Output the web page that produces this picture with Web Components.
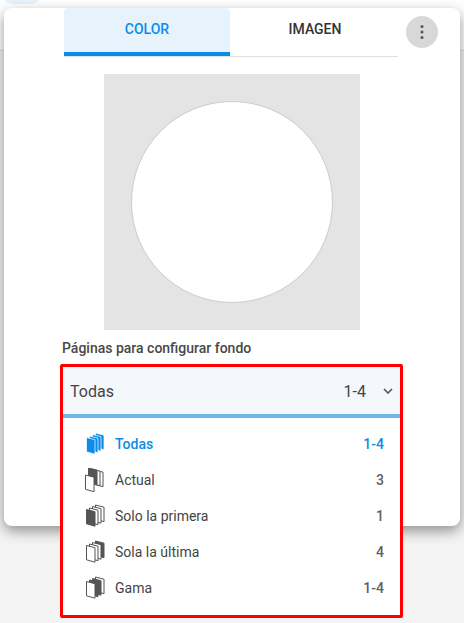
<!DOCTYPE html>
<html lang="es">
<head>
<meta charset="utf-8">
<title>Fondo</title>
<style>
  html, body { margin: 0; height: 100%; }
  body { background: #f4f4f4; font-family: Roboto, "Liberation Sans", sans-serif; overflow: hidden; }
</style>
</head>
<body>
<bg-panel>
  <page-tabs></page-tabs>
  <color-preview></color-preview>
  <page-select label="Páginas para configurar fondo">
    <page-option pages="bbbb" name="Todas" range="1-4" selected></page-option>
    <page-option pages="wdww" gap name="Actual" range="3"></page-option>
    <page-option pages="dwww" name="Solo la primera" range="1"></page-option>
    <page-option pages="wwwd" name="Sola la última" range="4"></page-option>
    <page-option pages="wddw" name="Gama" range="1-4"></page-option>
  </page-select>
</bg-panel>

<script>
(function() {
    'use strict';

    class BgPanel extends HTMLElement {
        constructor() {
            super();
            this.attachShadow({ mode: 'open' }).innerHTML = `
                <style>
                    :host { display: block; padding-top: 8px; position: relative; }
                    .backdrop {
                        position: absolute; left: 0; top: 0; right: 0; height: 50px;
                        background: #fff; border-bottom: 1px solid #ddd;
                    }
                    .blob {
                        position: absolute; left: 0; top: -10px; width: 44px; height: 14px;
                        border-radius: 0 0 20px 20px; background: #e6f3fd;
                    }
                    .panel {
                        position: relative;
                        box-sizing: border-box;
                        height: 518px;
                        margin: 0 4px;
                        padding-left: 56px;
                        background: #fff;
                        border-radius: 8px;
                        box-shadow: 0 5px 14px rgba(0,0,0,.42);
                    }
                </style>
                <div class="backdrop"></div>
                <div class="blob"></div>
                <div class="panel"><slot></slot></div>
            `;
        }
    }

    class PageTabs extends HTMLElement {
        constructor() {
            super();
            this.attachShadow({ mode: 'open' }).innerHTML = `
                <style>
                    :host { display: flex; align-items: flex-start; gap: 8px; margin-left: 4px; }
                    .tabs { display: flex; width: 334px; border-bottom: 1px solid #e0e0e0; height: 48px; }
                    .tab {
                        flex: 0 0 166px;
                        height: 42px;
                        padding-bottom: 2px;
                        display: flex; align-items: center; justify-content: center;
                        font: 500 14px Roboto, sans-serif;
                        color: #333;
                        border-radius: 4px 4px 0 0;
                        border-bottom: 4px solid transparent;
                    }
                    .tab.active { color: #0b8ce9; background: #e6f3fd; border-bottom-color: #0b8ce9; }
                    .tab + .tab { flex-basis: 167px; padding-left: 1.5px; }
                    .more {
                        width: 32px; height: 32px; margin-top: 8px; border-radius: 50%;
                        background: #d8d8d8; display: flex; align-items: center; justify-content: center;
                    }
                </style>
                <div class="tabs">
                    <div class="tab active">COLOR</div>
                    <div class="tab">IMAGEN</div>
                </div>
                <div class="more">
                    <svg width="4" height="16" viewBox="0 0 4 16" fill="#555">
                        <circle cx="2" cy="2.5" r="1.5"/><circle cx="2" cy="8" r="1.5"/><circle cx="2" cy="13.5" r="1.5"/>
                    </svg>
                </div>
            `;
        }
    }

    class ColorPreview extends HTMLElement {
        constructor() {
            super();
            this.attachShadow({ mode: 'open' }).innerHTML = `
                <style>
                    :host {
                        display: flex; align-items: center; justify-content: center;
                        width: 256px; height: 256px;
                        margin: 17px 0 0 44px;
                        background: #e4e4e4;
                    }
                    .circle {
                        width: 200px; height: 200px; border-radius: 50%;
                        background: #fff; border: 1px solid #ccc;
                    }
                </style>
                <div class="circle"></div>
            `;
        }
    }

    class PageSelect extends HTMLElement {
        constructor() {
            super();
            this.attachShadow({ mode: 'open' }).innerHTML = `
                <style>
                    :host { display: block; }
                    .label {
                        margin: 8px 0 6px 2px;
                        font: 500 14px/20px Roboto, sans-serif;
                        color: #484848;
                    }
                    .box {
                        width: 343px; height: 254px; box-sizing: border-box;
                        border: 3px solid #f00; border-radius: 2px;
                        background: #fff;
                    }
                    .head {
                        display: flex; align-items: center;
                        height: 46px; padding: 1px 7px 0;
                        background: #f4f8fc;
                        border-bottom: 4px solid #6cb8e9;
                        font: 400 16px Roboto, sans-serif;
                        color: #444;
                    }
                    .head .name { flex: 1; }
                    .head svg { margin: 0 0 0 17px; }
                    .list { padding-top: 8px; }
                </style>
                <div class="label"></div>
                <div class="box">
                    <div class="head">
                        <span class="name">Todas</span>
                        <span>1-4</span>
                        <svg width="10" height="6" viewBox="0 0 10 6" fill="none" stroke="#555" stroke-width="1.6">
                            <path d="M1 1l4 4 4-4"/>
                        </svg>
                    </div>
                    <div class="list"><slot></slot></div>
                </div>
            `;
            this.shadowRoot.querySelector('.label').textContent = this.getAttribute('label');
        }
    }

    const FILLS = { b: '#0b8ce9', d: '#555', w: '#fff' };

    // the pile is drawn from its back page to the front one
    function pagesSvg(spec, gap) {
        let out = '';
        for (let i = 3; i >= 0; i--) {
            let x = 2.5 + i * 3;
            let y = 5.5 - i * 1.5;
            if (gap) {
                x = i === 0 ? 1.5 : 1.5 + i * 3;
                y = i === 0 ? 7 : i - 1;
            }
            const kind = spec[i];
            const edge = kind === 'b' ? '#fff' : '#555';
            const width = kind === 'b' ? 0.7 : 1;
            out += `<path d="M${x} ${y}l8.5 2.2v14.5l-8.5-2.4z" fill="${FILLS[kind]}" stroke="${edge}" stroke-width="${width}" stroke-linejoin="round"/>`;
        }
        return out;
    }

    class PageOption extends HTMLElement {
        constructor() {
            super();
            const selected = this.hasAttribute('selected');
            this.attachShadow({ mode: 'open' }).innerHTML = `
                <style>
                    :host {
                        display: flex; align-items: center;
                        height: 36px; padding: 0 16px 0 21px;
                        font: 400 14px Roboto, sans-serif;
                        color: ${selected ? '#0b8ce9' : '#444'};
                        font-weight: ${selected ? 500 : 400};
                    }
                    svg { flex: none; margin-right: 7px; }
                    .name { flex: 1; }
                    .range { font-weight: 500; color: ${selected ? '#0b8ce9' : '#5f5f5f'}; }
                </style>
                <svg width="24" height="24" viewBox="0 0 24 24">${pagesSvg(this.getAttribute('pages'), this.hasAttribute('gap'))}</svg>
                <span class="name">${this.getAttribute('name')}</span>
                <span class="range">${this.getAttribute('range')}</span>
            `;
        }
    }

    customElements.define('bg-panel', BgPanel);
    customElements.define('page-tabs', PageTabs);
    customElements.define('color-preview', ColorPreview);
    customElements.define('page-select', PageSelect);
    customElements.define('page-option', PageOption);
})();
</script>
</body>
</html>
